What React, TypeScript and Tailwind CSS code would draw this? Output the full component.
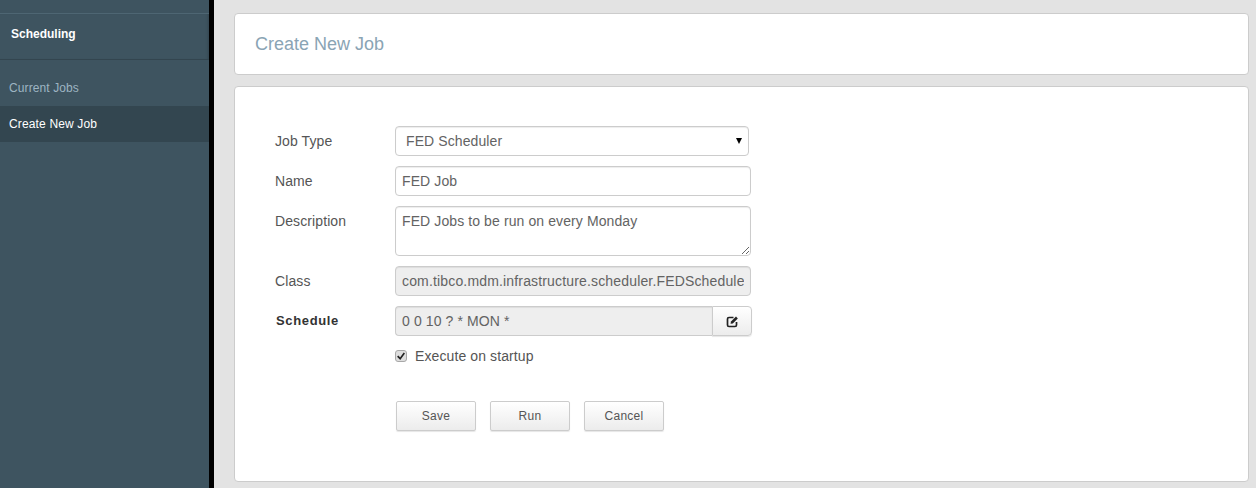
import React from "react";

const field = "h-[30px] rounded-[4px] border border-[#cccccc] px-[6px] text-[14px] tracking-[0.1px] text-[#636363] shadow-[inset_0_1px_1px_rgba(0,0,0,0.075)] outline-none";

function Row({ label, bold, children }: { label: string; bold?: boolean; children: React.ReactNode }) {
  return (
    <div className="flex">
      <div className={"w-[120px] leading-[30px] " + (bold ? "pl-[1px] text-[13px] font-bold tracking-[0.65px] text-[#333333]" : "text-[14px] tracking-[0.1px] text-[#555555]")}>{label}</div>
      {children}
    </div>
  );
}

function Btn({ children }: { children: React.ReactNode }) {
  return (
    <button className="h-[30px] w-[80px] rounded-[2px] border border-[#cccccc] bg-gradient-to-b from-white to-[#ececec] text-[12px] tracking-[0.25px] text-[#555555] shadow-[0_1px_1px_rgba(0,0,0,0.1)]">
      {children}
    </button>
  );
}

export default function App() {
  return (
    <div className="flex h-[488px] w-[1256px] overflow-hidden bg-[#e3e3e3] font-['Liberation_Sans',Arial,sans-serif]">
      <aside className="h-full w-[214px] shrink-0 border-r-[5px] border-black bg-[#3e5460]">
        <div className="mt-[13px] h-[47px] border-y border-t-[#4e6673] border-b-[#33454f] pl-[11px] pt-[13px] text-[12px] leading-[14px] font-bold text-white shadow-[inset_-3px_0_3px_-2px_rgba(0,0,0,0.18)]">
          Scheduling
        </div>
        <div className="mt-[18px] px-[9px] text-[12px] leading-[20px] tracking-[0.1px] text-[#9db4c2]">Current Jobs</div>
        <div className="mt-[8px] h-[36px] bg-[#334650] px-[9px] text-[12px] leading-[36px] tracking-[0.15px] text-white">Create New Job</div>
      </aside>
      <main className="flex-1 pl-[20px] pr-[7px] pt-[13px]">
        <div className="flex h-[62px] items-center rounded-[4px] border border-[#cccccc] bg-white pl-[20px] text-[18px] text-[#8aa4b4]">
          Create New Job
        </div>
        <div className="mt-[11px] h-[396px] rounded-[4px] border border-[#cccccc] bg-white pl-[40px] pt-[39px]">
          <div className="flex flex-col gap-[10px]">
            <Row label="Job Type">
              <div className={field + " relative w-[354px] pl-[10px] leading-[28px]"}>
                FED Scheduler
                <span className="absolute right-[6px] top-[11px] h-0 w-0 border-x-[3.5px] border-t-[6px] border-x-transparent border-t-black" />
              </div>
            </Row>
            <Row label="Name">
              <input readOnly value="FED Job" className={field + " w-[356px]"} />
            </Row>
            <Row label="Description">
              <textarea readOnly value="FED Jobs to be run on every Monday" className={field + " h-[50px] w-[356px] py-[4px] leading-[20px]"} />
            </Row>
            <Row label="Class">
              <input readOnly value="com.tibco.mdm.infrastructure.scheduler.FEDScheduler" className={field + " w-[356px] bg-[#eeeeee] tracking-[0.16px]"} />
            </Row>
            <Row label="Schedule" bold>
              <div className="flex">
                <input readOnly value="0 0 10 ? * MON *" className={field + " w-[317px] rounded-r-none border-r-0 bg-[#eeeeee]"} />
                <div className="flex h-[30px] w-[40px] items-center justify-center rounded-r-[4px] border border-[#cccccc] bg-gradient-to-b from-white to-[#ececec] text-[#222222] shadow-[0_1px_1px_rgba(0,0,0,0.1)]">
                  <svg viewBox="0 0 13 13" className="h-[13px] w-[13px]" fill="none">
                    <path d="M7.5 2.5 H3 Q1.5 2.5 1.5 4 V10 Q1.5 11.5 3 11.5 H9 Q10.5 11.5 10.5 10 V7" stroke="#222222" strokeWidth="1.7" />
                    <path d="M4.5 8.8 L5 6.6 L10 1.6 L11.8 3.4 L6.8 8.4 Z" fill="#222222" />
                  </svg>
                </div>
              </div>
            </Row>
          </div>
          <div className="mt-[10px] flex items-center pl-[120px]">
            <span className="flex h-[12px] w-[12px] items-center justify-center rounded-[3px] border border-[#a8a8a8] bg-[#dedede]">
              <svg viewBox="0 0 12 12" className="h-[10px] w-[10px]">
                <path d="M2 6.2 L5 9.2 L10 2.5" fill="none" stroke="#222222" strokeWidth="2" />
              </svg>
            </span>
            <span className="ml-[8px] text-[14px] leading-[20px] tracking-[0.1px] text-[#555555]">Execute on startup</span>
          </div>
          <div className="ml-[121px] mt-[35px] flex gap-[14px]">
            <Btn>Save</Btn>
            <Btn>Run</Btn>
            <Btn>Cancel</Btn>
          </div>
        </div>
      </main>
    </div>
  );
}
